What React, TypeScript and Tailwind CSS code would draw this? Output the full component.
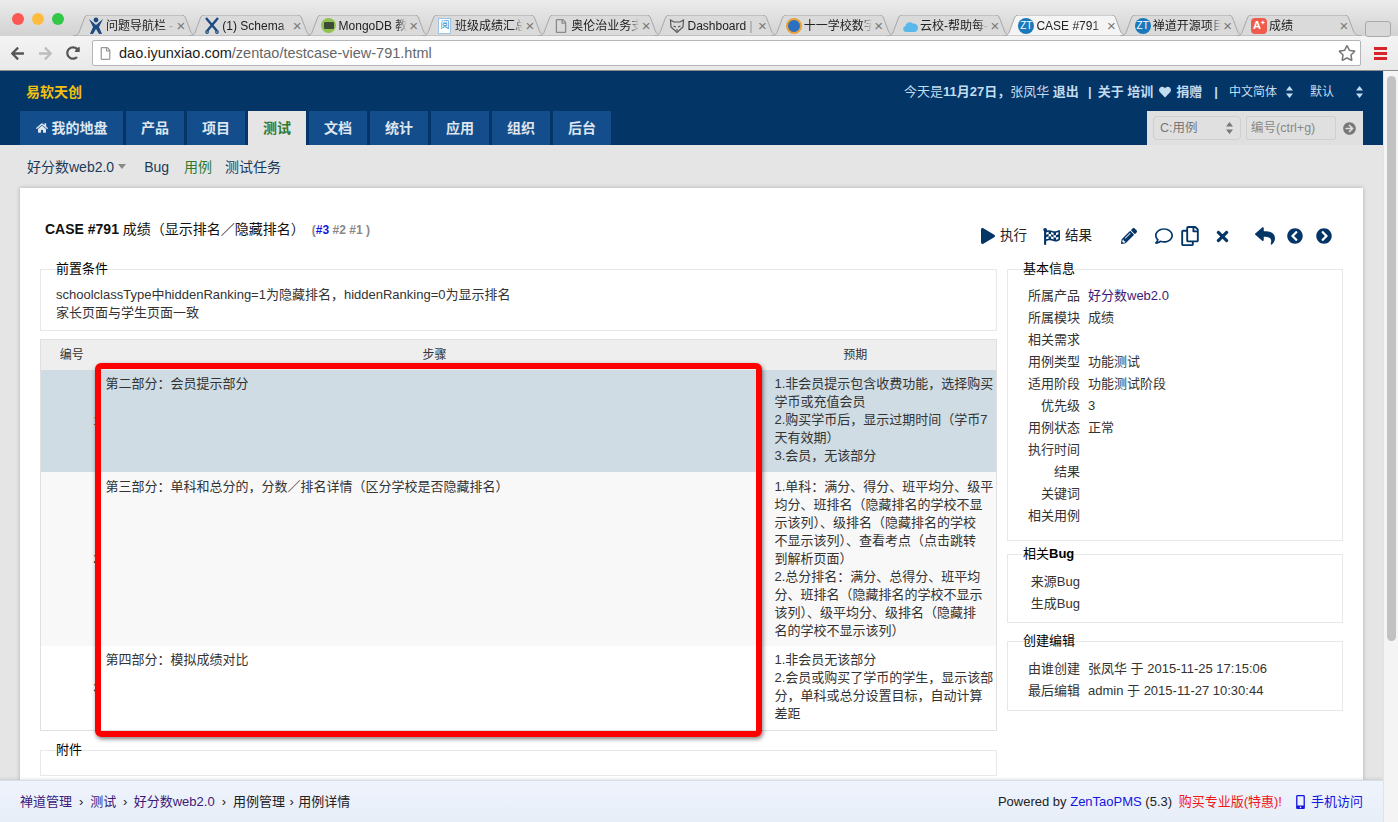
import { FaPlay, FaFlagCheckered, FaPencilAlt, FaRegComment, FaRegCopy, FaTimes, FaReply, FaChevronCircleLeft, FaChevronCircleRight, FaHome, FaHeart, FaArrowCircleRight, FaMobileAlt, FaArrowLeft, FaArrowRight, FaRedoAlt, FaRegStar, FaRegFile } from 'react-icons/fa'

const browserTabs = [
    { title: '问题导航栏 -', icon: 'jira' },
    { title: '(1) Schema', icon: 'tool' },
    { title: 'MongoDB 教', icon: 'mongo' },
    { title: '班级成绩汇总', icon: 'doc' },
    { title: '奥伦治业务支', icon: 'file' },
    { title: 'Dashboard |', icon: 'fox' },
    { title: '十一学校数字', icon: 'ie' },
    { title: '云校-帮助每-', icon: 'cloud' },
    { title: 'CASE #791', icon: 'zt', active: true },
    { title: '禅道开源项目', icon: 'zt' },
    { title: '成绩', icon: 'a' },
]

const navItems = [
    { label: '产品' },
    { label: '项目' },
    { label: '测试', active: true },
    { label: '文档' },
    { label: '统计' },
    { label: '应用' },
    { label: '组织' },
    { label: '后台' },
]

const steps = [
    {
        n: '1', title: '第二部分：会员提示部分', rowClass: 'h-[102px] bg-[#cfdce3]', pad: 'pt-[5px]',
        expect: ['1.非会员提示包含收费功能，选择购买', '学币或充值会员', '2.购买学币后，显示过期时间（学币7', '天有效期）', '3.会员，无该部分'],
    },
    {
        n: '2', title: '第三部分：单科和总分的，分数／排名详情（区分学校是否隐藏排名）', rowClass: 'h-[174px] bg-[#f8f8f8]', pad: 'pt-[6px]',
        expect: ['1.单科：满分、得分、班平均分、级平', '均分、班排名（隐藏排名的学校不显', '示该列）、级排名（隐藏排名的学校', '不显示该列）、查看考点（点击跳转', '到解析页面）', '2.总分排名：满分、总得分、班平均', '分、班排名（隐藏排名的学校不显示', '该列）、级平均分、级排名（隐藏排', '名的学校不显示该列）'],
    },
    {
        n: '3', title: '第四部分：模拟成绩对比', rowClass: 'h-[85px] bg-white', pad: 'pt-[5px]',
        expect: ['1.非会员无该部分', '2.会员或购买了学币的学生，显示该部', '分，单科或总分设置目标，自动计算', '差距'],
    },
]

const basicInfo: [string, string, string?][] = [
    ['所属产品', '好分数web2.0', 'text-[#3c1a78]'],
    ['所属模块', '成绩'],
    ['相关需求', ''],
    ['用例类型', '功能测试'],
    ['适用阶段', '功能测试阶段'],
    ['优先级', '3'],
    ['用例状态', '正常'],
    ['执行时间', ''],
    ['结果', ''],
    ['关键词', ''],
    ['相关用例', ''],
]

function TabIcon({ kind }: { kind: string }) {
    if (kind === 'zt' || kind === 'ie') {
        return (
            <span className={`flex size-[16px] items-center justify-center rounded-full text-[10px] leading-none text-white ${kind === 'zt' ? 'bg-[#1a78bd]' : 'border-2 border-[#e8a23a] bg-[#2a6fc0]'}`}>
                {kind === 'zt' ? 'ZT' : ''}
            </span>
        )
    }
    if (kind === 'a') {
        return <span className="flex size-[16px] items-center justify-center rounded-sm bg-[#ef5b4c] text-[11px] font-bold leading-none text-white">A⁺</span>
    }
    if (kind === 'mongo') {
        return (
            <span className="flex size-[15px] items-center justify-center rounded-full bg-[#8fc24f]">
                <span className="h-[7px] w-[10px] rounded-[1px] bg-[#3d4a3a]" />
            </span>
        )
    }
    if (kind === 'file') return <FaRegFile className="text-[14px] text-[#8a8a8a]" />
    if (kind === 'doc') {
        return <span className="flex h-[16px] w-[13px] items-center justify-center border border-[#9cc4e4] bg-white text-[9px] leading-none text-[#2a7ab8]">阅</span>
    }
    if (kind === 'cloud') {
        return (
            <svg width="16" height="16" viewBox="0 0 16 16">
                <path d="M4 14a3 3 0 0 1-.6-5.900A4.500 4.500 0 0 1 11 5.500 3.200 3.200 0 0 1 12.500 14z" fill="#5cb8ea" />
            </svg>
        )
    }
    if (kind === 'fox') {
        return (
            <svg width="16" height="16" viewBox="0 0 16 16" fill="none" stroke="#555" strokeWidth="1.200">
                <path d="M1.500 2 L5 4 H11 L14.500 2 L14 9 L8 14.500 L2 9 Z" />
                <path d="M4.500 8 L7 9 M11.500 8 L9 9 M8 11 V13" />
            </svg>
        )
    }
    if (kind === 'tool') {
        return (
            <svg width="16" height="17" viewBox="0 0 16 17" stroke="#1d4a80" strokeWidth="2.400" fill="none">
                <path d="M2 1 L13 14 M14 1 L3 14" />
                <circle cx="3" cy="15" r="1.300" strokeWidth="1.200" />
                <circle cx="13" cy="15" r="1.300" strokeWidth="1.200" />
            </svg>
        )
    }
    return (
        <svg width="14" height="17" viewBox="0 0 14 17" fill="#1d4a80">
            <circle cx="7" cy="3" r="2.400" />
            <path d="M0 2 L7 8 L14 2 L10 10 L13 17 H10 L7 12 L4 17 H1 L4 10 Z" />
        </svg>
    )
}

function BrowserTab({ title, icon, active }: { title: string, icon: string, active?: boolean }) {
    return (
        <div className="relative flex h-[21px] w-[116.3px] shrink-0 items-center pl-[9px] pr-[9px]">
            <svg className="absolute -left-[5px] top-0 h-[21px] w-[126px]" viewBox="0 0 126 21" preserveAspectRatio="none">
                <path
                    d="M0 21 C5 21 6 18 7 15 L11 4 C12 1 13 0 16 0 H108 C111 0 112 1 113 4 L117 15 C118 18 120 21 126 21 Z"
                    fill={active ? '#f4f4f4' : '#dadada'}
                    stroke="#a8a8a8"
                    strokeWidth="1"
                />
            </svg>
            <span className="relative flex w-[18px] shrink-0 justify-center"><TabIcon kind={icon} /></span>
            <span className="relative ml-[1px] w-[68px] overflow-hidden whitespace-nowrap text-[12px] leading-[16px] text-[#222] [mask-image:linear-gradient(to_right,black_85%,transparent)]">{title}</span>
            <span className="relative ml-auto text-[15px] leading-none text-[#777]">×</span>
        </div>
    )
}

function BrowserChrome() {
    return (
        <div className="h-[71px] shrink-0 border-b border-[#8d8d8d] bg-[#ececec]">
            <div className="flex h-[36px] bg-gradient-to-b from-[#ececec] to-[#d2d2d2] pt-[15px]">
                <div className="flex w-[78px] shrink-0 gap-[8px] pl-[12px]">
                    <span className="-mt-[2px] size-[12px] rounded-full bg-[#fc5753]" />
                    <span className="-mt-[2px] size-[12px] rounded-full bg-[#fdbc40]" />
                    <span className="-mt-[2px] size-[12px] rounded-full bg-[#33c748]" />
                </div>
                {browserTabs.map(t => <BrowserTab key={t.title} title={t.title} icon={t.icon} active={t.active} />)}
                <div className="ml-[8px] mt-[6px] h-[16px] w-[26px] rounded-[3px] border border-[#aaa] bg-[#d8d8d8]" />
            </div>
            <div className="flex h-[34px] items-center bg-gradient-to-b from-[#f4f4f4] to-[#e9e9e9]">
                <FaArrowLeft className="ml-[10px] text-[15px] text-[#555]" />
                <FaArrowRight className="ml-[13px] text-[15px] text-[#bdbdbd]" />
                <FaRedoAlt className="ml-[13px] text-[14px] text-[#555]" />
                <div className="ml-[12px] flex h-[26px] w-[1269px] items-center rounded-[2px] border border-[#b5b5b5] bg-white pl-[6px] pr-[4px]">
                    <FaRegFile className="text-[13px] text-[#999]" />
                    <span className="ml-[7px] pt-[2px] text-[14.500px] text-[#666]"><span className="text-[#222]">dao.iyunxiao.com</span>/zentao/testcase-view-791.html</span>
                    <FaRegStar className="ml-auto text-[18px] text-[#777]" />
                </div>
                <div className="ml-[13px] flex w-[13px] flex-col gap-[2px]">
                    <span className="h-[3px] bg-[#d8232a]" />
                    <span className="h-[3px] bg-[#d8232a]" />
                    <span className="h-[3px] bg-[#d8232a]" />
                </div>
            </div>
        </div>
    )
}

function UpDown({ className }: { className?: string }) {
    return (
        <svg className={className} width="7" height="12" viewBox="0 0 7 12" fill="currentColor">
            <path d="M3.500 0 L7 4.500 H0 Z M3.500 12 L0 7.500 H7 Z" />
        </svg>
    )
}

function Header() {
    return (
        <div className="h-[74px] shrink-0 bg-[#033567]">
            <div className="flex h-[40px] items-center pt-[2px] text-[13px] font-bold text-[#c2dcf0]">
                <span className="ml-[26px] w-[56px] shrink-0 text-[14px] text-[#f2c10f]">易软天创</span>
                <span className="ml-[822px] w-[175px] shrink-0 whitespace-nowrap"><span className="font-normal">今天是</span>11月27日，<span className="font-normal">张凤华</span> 退出</span>
                <span className="ml-[9px]">|</span>
                <span className="ml-[6px]">关于 培训</span>
                <FaHeart className="ml-[6px] text-[12px]" />
                <span className="ml-[5px]">捐赠</span>
                <span className="ml-[12px]">|</span>
                <span className="ml-[11px] text-[12px] font-normal">中文简体</span>
                <UpDown className="ml-[9px]" />
                <span className="ml-[17px] text-[12px] font-normal">默认</span>
                <UpDown className="ml-[22px]" />
            </div>
            <div className="flex h-[34px]">
                <div className="ml-[20px] flex gap-[3px]">
                    <div className="flex w-[103px] items-center justify-center gap-[4px] bg-[#134d8c] text-[14px] font-bold text-[#dfe6ee]">
                        <FaHome className="text-[12px]" />
                        <span>我的地盘</span>
                    </div>
                    {navItems.map(n => (
                        <div
                            key={n.label}
                            className={`flex w-[58px] items-center justify-center text-[14px] font-bold ${n.active ? 'bg-[#e5e5e5] text-[#2f7a2f]' : 'bg-[#134d8c] text-[#dfe6ee]'}`}
                        >
                            {n.label}
                        </div>
                    ))}
                </div>
                <div className="ml-[536px] flex w-[216px] items-center bg-[#e0e0e0] pl-[6px]">
                    <div className="flex h-[24px] w-[88px] items-center rounded-[4px] border border-[#cfcfcf] pl-[6px] text-[12.500px] text-[#777]">
                        C:用例
                        <UpDown className="ml-auto mr-[7px]" />
                    </div>
                    <div className="ml-[5px] flex h-[24px] w-[90px] items-center rounded-[2px] border border-[#cfcfcf] pl-[4px] text-[12.500px] text-[#888]">编号(ctrl+g)</div>
                    <FaArrowCircleRight className="ml-[7px] text-[13px] text-[#777]" />
                </div>
            </div>
        </div>
    )
}

function SubNav() {
    return (
        <div className="flex h-[43px] shrink-0 items-center pt-[1px] pl-[27px] text-[14px] text-[#1b3a5a]">
            <span>好分数web2.0</span>
            <span className="ml-[4px] -mt-[2px] size-0 border-x-[4.500px] border-t-[5px] border-x-transparent border-t-[#888]" />
            <span className="ml-[18px]">Bug</span>
            <span className="ml-[15px] text-[#2f7a2f]">用例</span>
            <span className="ml-[13px]">测试任务</span>
        </div>
    )
}

function Box({ legend, className, children }: { legend: React.ReactNode, className?: string, children?: React.ReactNode }) {
    return (
        <div className={`relative border border-[#e8e8e8] ${className ?? ''}`}>
            <span className="absolute left-[15px] -top-[10px] text-[13px] leading-[18px] text-black">{legend}</span>
            {children}
        </div>
    )
}

function InfoRow({ label, value, valueClass }: { label: string, value?: string, valueClass?: string }) {
    return (
        <div className="flex h-[22px] items-center text-[13px] text-[#333]">
            <span className="w-[72px] shrink-0 text-right">{label}</span>
            <span className={`ml-[8px] whitespace-nowrap ${valueClass ?? ''}`}>{value}</span>
        </div>
    )
}

function ActionBar() {
    return (
        <div className="mr-[31px] flex h-[20px] items-center text-[13.500px] text-[#222]">
            <FaPlay className="text-[16px] text-[#033567]" />
            <span className="ml-[4px]">执行</span>
            <FaFlagCheckered className="ml-[16px] text-[17px] text-[#033567]" />
            <span className="ml-[5px]">结果</span>
            <FaPencilAlt className="ml-[29px] text-[16px] text-[#033567]" />
            <FaRegComment className="ml-[18px] text-[18px] text-[#033567]" />
            <FaRegCopy className="ml-[7px] text-[20px] text-[#033567]" />
            <FaTimes className="ml-[14px] text-[17px] text-[#033567]" />
            <FaReply className="ml-[24px] text-[20px] text-[#033567]" />
            <FaChevronCircleLeft className="ml-[12px] text-[16px] text-[#033567]" />
            <FaChevronCircleRight className="ml-[13px] text-[16px] text-[#033567]" />
        </div>
    )
}

function StepsTable() {
    return (
        <table className="mt-[8px] w-[957px] table-fixed border-collapse border border-[#e0e0e0] text-[13px] text-[#333]">
            <thead>
                <tr className="h-[30px] bg-[#eeeeee] text-[12px]">
                    <th className="w-[62px] font-normal">编号</th>
                    <th className="font-normal">步骤</th>
                    <th className="w-[230px] pr-[52px] font-normal">预期</th>
                </tr>
            </thead>
            <tbody>
                {steps.map(s => (
                    <tr key={s.n} className={s.rowClass}>
                        <td className="pr-[2px] text-right align-middle">{s.n}</td>
                        <td className={`pl-[3px] align-top leading-[18px] ${s.pad}`}>{s.title}</td>
                        <td className={`pl-[8px] align-top leading-[18px] ${s.pad}`}>
                            {s.expect.map(line => <div key={line} className="whitespace-nowrap">{line}</div>)}
                        </td>
                    </tr>
                ))}
            </tbody>
        </table>
    )
}

export default function App() {
    return (
        <div className="flex h-[822px] w-[1398px] flex-col overflow-hidden bg-[#e5e5e5] font-['Liberation_Sans','Noto_Sans_CJK_SC',sans-serif]">
            <BrowserChrome />
            <div className="flex min-h-0 flex-1">
                <div className="relative flex w-[1383px] shrink-0 flex-col overflow-hidden">
                    <Header />
                    <SubNav />
                    <div className="mx-[20px] min-h-0 flex-1 bg-white shadow-[0_0_4px_rgba(0,0,0,0.25)]">
                        <div className="flex h-[81px] items-start justify-between pl-[25px] pt-[31px]">
                            <div className="flex items-baseline whitespace-nowrap">
                                <span className="text-[14px] font-bold text-[#111]">CASE #791 <span className="font-normal">成绩（显示排名／隐藏排名）</span></span>
                                <span className="ml-[7px] text-[12px] font-bold text-[#888]">(<span className="text-[#1515e0]">#3</span> #2 #1 )</span>
                            </div>
                            <div className="pt-[7px]"><ActionBar /></div>
                        </div>
                        <div className="flex pl-[20px]">
                            <div className="w-[957px] shrink-0">
                                <Box legend="前置条件" className="h-[62px] px-[15px] pt-[16px] text-[13px] leading-[18px] text-[#333]">
                                    <div>schoolclassType中hiddenRanking=1为隐藏排名，hiddenRanking=0为显示排名</div>
                                    <div>家长页面与学生页面一致</div>
                                </Box>
                                <StepsTable />
                                <Box legend="附件" className="mt-[19px] h-[26px]" />
                            </div>
                            <div className="ml-[10px] w-[336px] shrink-0">
                                <Box legend="基本信息" className="h-[272px] pt-[15px]">
                                    {basicInfo.map(([label, value, cls]) => <InfoRow key={label} label={label} value={value} valueClass={cls} />)}
                                </Box>
                                <Box legend={<>相关<b>Bug</b></>} className="mt-[13px] h-[69px] pt-[16px]">
                                    <InfoRow label="来源Bug" />
                                    <InfoRow label="生成Bug" />
                                </Box>
                                <Box legend="创建编辑" className="mt-[18px] h-[70px] pt-[16px]">
                                    <InfoRow label="由谁创建" value="张凤华 于 2015-11-25 17:15:06" />
                                    <InfoRow label="最后编辑" value="admin 于 2015-11-27 10:30:44" />
                                </Box>
                            </div>
                        </div>
                    </div>
                    <div className="flex h-[42px] shrink-0 items-center justify-between border-t border-[#d8dde6] bg-gradient-to-b from-[#eef3fc] to-[#e8eef8] px-[20px] text-[13px] text-[#222] shadow-[0_-1px_3px_rgba(0,0,0,0.12)]">
                        <div className="flex items-center whitespace-nowrap">
                            <span className="text-[#3c1a78]">禅道管理</span>
                            <span className="mx-[7px]">›</span>
                            <span className="text-[#3c1a78]">测试</span>
                            <span className="mx-[6.500px]">›</span>
                            <span className="text-[#3c1a78]">好分数web2.0</span>
                            <span className="mx-[7px]">›</span>
                            <span>用例管理</span>
                            <span className="mx-[4.500px]">›</span>
                            <span>用例详情</span>
                        </div>
                        <div className="flex items-center whitespace-nowrap">
                            <span>Powered by <span className="text-[#1515e0]">ZenTaoPMS</span> (5.3) <span className="ml-[3px] text-[#f01818]">购买专业版(特惠)!</span></span>
                            <FaMobileAlt className="ml-[14px] h-[14px] w-[9px] text-[#1515e0]" />
                            <span className="ml-[6px] text-[#1515e0]">手机访问</span>
                        </div>
                    </div>
                    {/* hand drawn highlight on top of the screenshot */}
                    <div className="absolute left-[95px] top-[292px] h-[374px] w-[667px] rounded-[6px] border-[6px] border-[#fe0000] shadow-[1px_2px_4px_rgba(0,0,0,0.5)]" />
                </div>
                <div className="relative w-[15px] shrink-0 border-l border-[#e2e2e2] bg-[#f4f4f4] pl-[3px] pt-[5px]">
                    <div className="h-[565px] w-[9px] rounded-[5px] bg-[#c2c2c2]" />
                </div>
            </div>
        </div>
    )
}
